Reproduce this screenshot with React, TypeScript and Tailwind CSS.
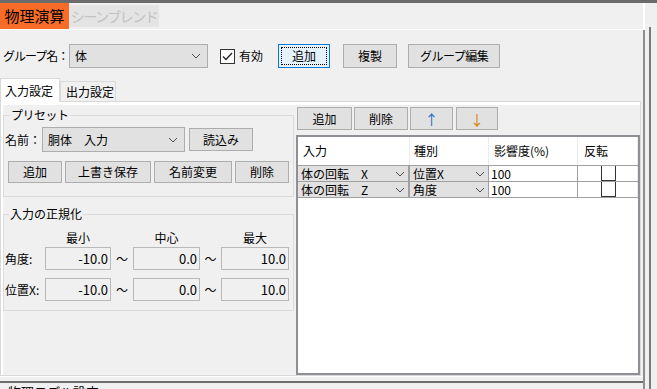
import React from 'react';

const Chevron = () => (
  <svg width="10" height="6" viewBox="0 0 10 6" className="shrink-0">
    <polyline points="1,1 5,5 9,1" fill="none" stroke="#505050" strokeWidth="1" />
  </svg>
);

function Btn({ children, className = '' }: { children: React.ReactNode; className?: string }) {
  return (
    <button className={`border border-[#adadad] bg-[#e1e1e1] text-[12px] leading-none flex items-center justify-center shrink-0 whitespace-nowrap ${className}`}>
      {children}
    </button>
  );
}

function Combo({ value, className = '' }: { value: string; className?: string }) {
  return (
    <div className={`border border-[#adadad] bg-[#e1e1e1] flex items-center justify-between pl-[5px] pr-[6px] shrink-0 ${className}`}>
      <span className="text-[12px] leading-none whitespace-nowrap">{value}</span>
      <Chevron />
    </div>
  );
}

function NumBox({ value }: { value: string }) {
  return (
    <div className="h-[23px] border border-[#b9b9b9] bg-[#f0f0f0] flex items-center justify-end pr-[2px] text-[13px] leading-none">
      {value}
    </div>
  );
}

const rows = [
  { input: '体の回転\u3000X', kind: '位置X', weight: '100' },
  { input: '体の回転\u3000Z', kind: '角度', weight: '100' },
];

export default function App() {
  return (
    <div className="w-[657px] h-[389px] overflow-hidden bg-[#f0f0f0] text-black font-[family-name:'Noto_Sans_CJK_JP',sans-serif] flex flex-col">
      <div className="h-[3px] bg-[#6b6b6b] shrink-0" />
      <div className="flex flex-1 min-h-0">
        <div className="w-[645px] flex flex-col shrink-0">
          {/* window tabs */}
          <div className="h-[27px] flex items-stretch border-b border-white border-r-2 border-r-white shrink-0">
            <div className="w-[69px] bg-[#f76d28] text-[15px] flex items-center justify-center whitespace-nowrap">物理演算</div>
            <div className="my-[2px] w-[90px] bg-[#e4e4e4] text-[#c2c2c2] text-[14px] tracking-[-1.5px] flex items-center justify-center whitespace-nowrap">シーンブレンド</div>
          </div>

          <div className="flex-1 flex flex-col border-r-2 border-[#8e8e8e] min-h-0">
            {/* group row */}
            <div className="mt-[14px] h-[24px] flex items-center pl-[3px] shrink-0">
              <span className="text-[12px] w-[66px] tracking-[-1px] whitespace-nowrap">グループ名：</span>
              <Combo value="体" className="w-[139px] h-[24px]" />
              <div className="ml-[12px] w-[15px] h-[15px] border border-[#333] bg-white flex items-center justify-center">
                <svg width="11" height="9" viewBox="0 0 11 9">
                  <polyline points="1,4.5 4,7.5 10,1" fill="none" stroke="#222" strokeWidth="1.3" />
                </svg>
              </div>
              <span className="ml-[4px] text-[12px]">有効</span>
              <button className="ml-[15px] w-[52px] h-[24px] border border-[#0078d7] bg-[#e5f1fb] p-[2px] flex">
                <span className="flex-1 border border-dotted border-black flex items-center justify-center text-[12px] leading-none">追加</span>
              </button>
              <Btn className="ml-[13px] w-[54px] h-[24px]">複製</Btn>
              <Btn className="ml-[11px] w-[92px] h-[24px] tracking-[-0.5px]">グループ編集</Btn>
            </div>

            {/* page tabs */}
            <div className="mt-[10px] h-[23px] flex items-end shrink-0">
              <div className="relative z-10 -mb-px h-[24px] w-[60px] bg-white border border-b-0 border-[#d9d9d9] text-[12px] flex items-center pl-[4px] whitespace-nowrap">入力設定</div>
              <div className="h-[20px] w-[56px] bg-[#f0f0f0] border border-b-0 border-[#d9d9d9] text-[12px] flex items-center pl-[5px] whitespace-nowrap">出力設定</div>
            </div>

            {/* tab page */}
            <div className="w-[641px] h-[275px] border border-[#d9d9d9] shrink-0 flex flex-col">
              <div className="flex-1 border-t-[3px] border-l-[2px] border-white flex gap-[2px] min-h-0">
                {/* left column */}
                <div className="w-[291px] flex flex-col">
                  <fieldset className="mt-[3px] border border-[#dcdcdc] px-[1px] pb-[13px]">
                    <legend className="ml-[5px] px-[1px] text-[12px] leading-[14px] tracking-[-0.5px]">プリセット</legend>
                    <div className="mt-[5px] flex items-center">
                      <span className="text-[12px] w-[37px] whitespace-nowrap">名前：</span>
                      <Combo value={'胴体\u3000入力'} className="w-[143px] h-[25px]" />
                      <Btn className="ml-[4px] w-[64px] h-[23px]">読込み</Btn>
                    </div>
                    <div className="mt-[9px] flex gap-[3px] pl-[3px]">
                      <Btn className="w-[54px] h-[22px]">追加</Btn>
                      <Btn className="w-[86px] h-[22px]">上書き保存</Btn>
                      <Btn className="w-[78px] h-[22px]">名前変更</Btn>
                      <Btn className="w-[54px] h-[22px]">削除</Btn>
                    </div>
                  </fieldset>

                  <fieldset className="mt-[10px] border border-[#dcdcdc] pb-[9px]">
                    <legend className="ml-[5px] px-[1px] text-[12px] leading-[14px]">入力の正規化</legend>
                    <div className="mt-[10px] grid grid-cols-[41px_66px_22px_67px_21px_68px] items-center text-[12px]">
                      <span />
                      <span className="text-center leading-[13px]">最小</span>
                      <span />
                      <span className="text-center leading-[13px]">中心</span>
                      <span />
                      <span className="text-center leading-[13px]">最大</span>
                    </div>
                    <div className="mt-[3px] grid grid-cols-[41px_66px_22px_67px_21px_68px] items-center text-[12px]">
                      <span className="pl-[1px]">角度:</span>
                      <NumBox value="-10.0" />
                      <span className="text-center">～</span>
                      <NumBox value="0.0" />
                      <span className="text-center">～</span>
                      <NumBox value="10.0" />
                    </div>
                    <div className="mt-[8px] grid grid-cols-[41px_66px_22px_67px_21px_68px] items-center text-[12px]">
                      <span className="pl-[1px] whitespace-nowrap">位置X:</span>
                      <NumBox value="-10.0" />
                      <span className="text-center">～</span>
                      <NumBox value="0.0" />
                      <span className="text-center">～</span>
                      <NumBox value="10.0" />
                    </div>
                  </fieldset>
                </div>

                {/* right column */}
                <div className="flex-1 flex flex-col min-w-0">
                  <div className="mt-[2px] flex items-center gap-[2px] pl-[1px] shrink-0">
                    <Btn className="w-[55px] h-[23px]">追加</Btn>
                    <Btn className="w-[54px] h-[23px]">削除</Btn>
                    <Btn className="w-[43px] h-[23px] text-[#2a68c8] text-[14px]">↑</Btn>
                    <Btn className="ml-[1px] w-[42px] h-[23px] text-[#d88200] text-[14px]">↓</Btn>
                  </div>
                  <div className="mt-[5px] flex-1 border-2 border-[#8f8f95] bg-white flex flex-col">
                    <div className="h-[29px] border-b border-[#a0a0a0] grid grid-cols-[112px_79px_89px_60px] text-[12px] shrink-0">
                      <div className="border-r border-[#ececec] flex items-center pl-[5px]">入力</div>
                      <div className="border-r border-[#ececec] flex items-center pl-[4px]">種別</div>
                      <div className="border-r border-[#ececec] flex items-center pl-[5px]">影響度(%)</div>
                      <div className="border-r border-[#ececec] flex items-center pl-[6px]">反転</div>
                    </div>
                    {rows.map((r) => (
                      <div key={r.input} className="h-[16px] border-b border-[#a0a0a0] grid grid-cols-[112px_79px_89px_60px] text-[12px] shrink-0">
                        <div className="bg-[#e1e1e1] border-r-2 border-[#a0a0a0] flex items-center justify-between pl-[3px] pr-[3px]">
                          <span className="leading-none whitespace-nowrap">{r.input}</span>
                          <Chevron />
                        </div>
                        <div className="bg-[#e1e1e1] border-r border-[#a0a0a0] flex items-center justify-between pl-[3px] pr-[3px]">
                          <span className="leading-none">{r.kind}</span>
                          <Chevron />
                        </div>
                        <div className="border-r border-[#a0a0a0] flex items-center pl-[2px] leading-none">{r.weight}</div>
                        <div className="border-r border-[#ececec] flex">
                          <span className="ml-[23px] w-[15px] h-full border-x border-b border-[#333]" />
                        </div>
                      </div>
                    ))}
                  </div>
                </div>
              </div>
            </div>

            {/* lower section */}
            <div className="h-px bg-white shrink-0" />
            <div className="mt-[4px] h-[2px] bg-[#6e6e6e] shrink-0" />
            <div className="pl-[8px] pt-[1px] text-[13px] leading-[16px] shrink-0 whitespace-nowrap">物理モデル設定</div>
          </div>
        </div>

        {/* right strip */}
        <div className="flex-1 flex pl-[4px]">
          <div className="mt-[24px] flex-1 border-l-2 border-[#7a7a7a] bg-[#f0f0f0]" />
        </div>
      </div>
    </div>
  );
}
